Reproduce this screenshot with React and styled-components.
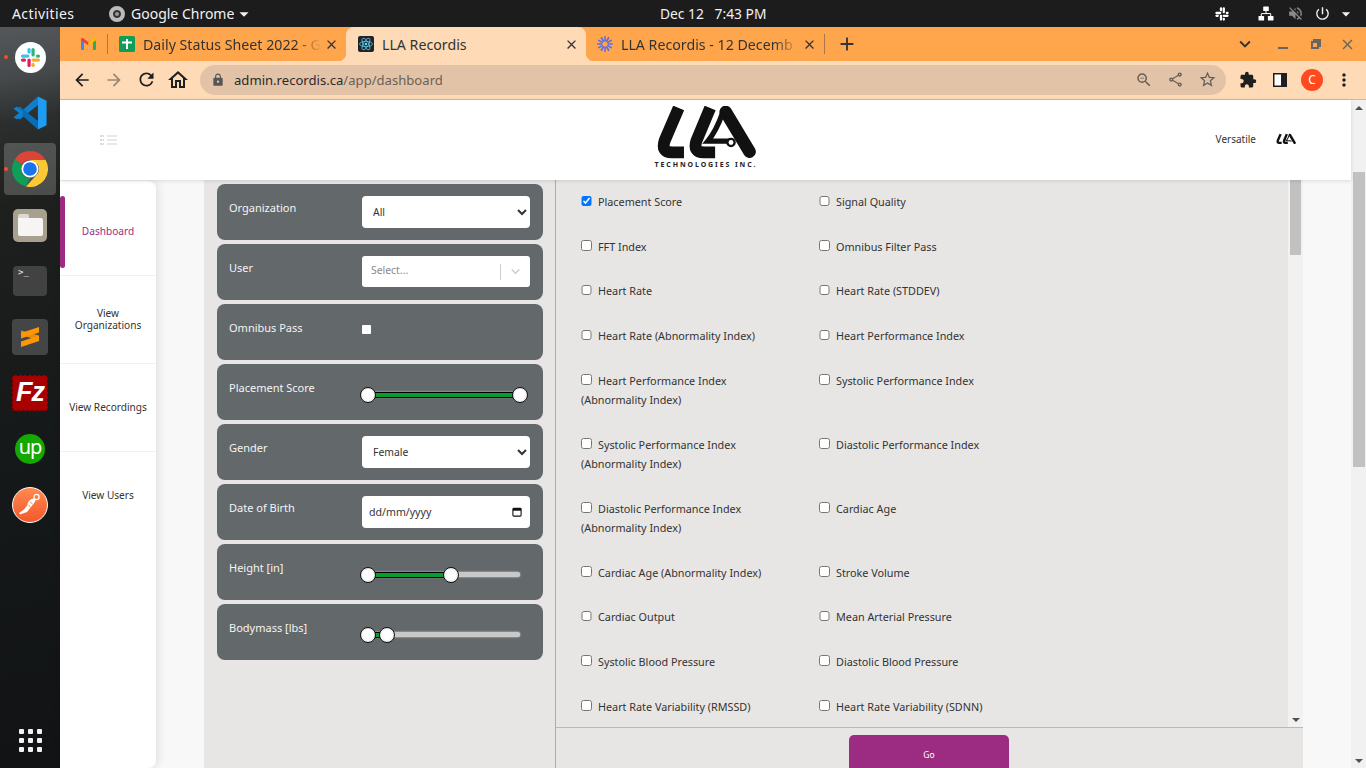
import React from 'react'
import styled, { createGlobalStyle } from 'styled-components'
import {
    MdArrowBack, MdArrowForward, MdRefresh, MdOutlineHome, MdLock, MdZoomOut,
    MdOutlineShare, MdStarBorder, MdExtension, MdMoreVert, MdClose, MdAdd,
    MdExpandMore, MdVolumeOff, MdPowerSettingsNew, MdArrowDropDown,
} from 'react-icons/md'

const FONT = '"Noto Sans", "Open Sans", sans-serif'
const PURPLE = '#9b2c82'

const GlobalStyle = createGlobalStyle`
    html, body { margin: 0; padding: 0; height: 100%; overflow: hidden; }
    body { font-family: ${FONT}; color: #333; }
    * { box-sizing: border-box; }
`

const checkRows = [
    ['Placement Score', 'Signal Quality'],
    ['FFT Index', 'Omnibus Filter Pass'],
    ['Heart Rate', 'Heart Rate (STDDEV)'],
    ['Heart Rate (Abnormality Index)', 'Heart Performance Index'],
    ['Heart Performance Index (Abnormality Index)', 'Systolic Performance Index'],
    ['Systolic Performance Index (Abnormality Index)', 'Diastolic Performance Index'],
    ['Diastolic Performance Index (Abnormality Index)', 'Cardiac Age'],
    ['Cardiac Age (Abnormality Index)', 'Stroke Volume'],
    ['Cardiac Output', 'Mean Arterial Pressure'],
    ['Systolic Blood Pressure', 'Diastolic Blood Pressure'],
    ['Heart Rate Variability (RMSSD)', 'Heart Rate Variability (SDNN)'],
]

const navItems = [
    { label: 'Dashboard', active: true, height: 95 },
    { label: 'View Organizations', height: 88 },
    { label: 'View Recordings', height: 88 },
    { label: 'View Users', height: 88 },
]

function SlackIcon({ size, mono }) {
    const c = mono ? ['#fff', '#fff', '#fff', '#fff'] : ['#36c5f0', '#2eb67d', '#ecb22e', '#e01e5a']
    return (
        <svg width={size} height={size} viewBox="0 0 24 24">
            <rect x="2" y="8.8" width="9" height="3.4" rx="1.7" fill={c[0]} />
            <rect x="8.8" y="2" width="3.4" height="6" rx="1.7" fill={c[0]} />
            <rect x="13" y="2" width="3.4" height="9" rx="1.7" fill={c[1]} />
            <rect x="17.6" y="8.8" width="4.4" height="3.4" rx="1.7" fill={c[1]} />
            <rect x="13" y="13" width="9" height="3.4" rx="1.7" fill={c[2]} />
            <rect x="13" y="17.6" width="3.4" height="4.4" rx="1.7" fill={c[2]} />
            <rect x="8.8" y="13" width="3.4" height="9" rx="1.7" fill={c[3]} />
            <rect x="2" y="13" width="5.4" height="3.4" rx="1.7" fill={c[3]} />
        </svg>
    )
}

function VsCodeIcon() {
    return (
        <svg width="36" height="36" viewBox="0 0 100 100">
            <path d="M72 4 L96 16 V84 L72 96 L72 70 L72 30 Z" fill="#1f9cf0" />
            <path d="M72 4 L72 28 L22 68 L10 60 Z" fill="#0f7fcc" />
            <path d="M72 96 L72 72 L22 32 L10 40 Z" fill="#0a6cb4" />
            <path d="M4 38 L14 32 L30 46 V54 L14 68 L4 62 L20 50 Z" fill="#0f7fcc" />
        </svg>
    )
}

function ChromeIcon({ size }) {
    return (
        <svg width={size} height={size} viewBox="0 0 36 36">
            <path d="M18 0 A18 18 0 0 1 33.6 9 L18 9 A9 9 0 0 0 10.2 13.5 L2.8 8.4 A18 18 0 0 1 18 0 Z" fill="#db4437" />
            <path d="M2.8 8.4 L10.2 13.5 A9 9 0 0 0 18 27 L14 35.6 A18 18 0 0 1 2.8 8.4 Z" fill="#0f9d58" />
            <path d="M33.6 9 A18 18 0 0 1 14 35.6 L25.8 22.5 A9 9 0 0 0 25.8 13.5 L18 9 Z" fill="#fcc934" />
            <circle cx="18" cy="18" r="8.6" fill="#fff" />
            <circle cx="18" cy="18" r="6.8" fill="#1a73e8" />
        </svg>
    )
}

function SublimeIcon() {
    return (
        <svg width="20" height="24" viewBox="0 0 20 24">
            <path d="M1 10 L19 15.5 V10.5 L1 5.5 Z" fill="#e88a10" />
            <path d="M1 8 L19 2 V7.5 L1 13.5 Z" fill="#ff9800" />
            <path d="M1 16.5 L19 10.5 V16 L1 22 Z" fill="#ff9800" />
        </svg>
    )
}

function PostmanIcon() {
    return (
        <svg width="26" height="26" viewBox="0 0 26 26">
            <circle cx="19.5" cy="5" r="2.6" fill="none" stroke="#fff" strokeWidth="1.2" />
            <path d="M17 6.5 C13 7 10.5 10 10.5 13 L7 17.5 L2 21 L3 22.5 L10 20 L14 15 C16.5 12 18 10 18.5 8.5 Z" fill="#fff" />
            <path d="M13 10 L15.5 12 M11.5 13 L13.5 14.6" stroke="#f4682f" strokeWidth="0.8" />
        </svg>
    )
}

function ReactFavicon() {
    return (
        <svg width="16" height="16" viewBox="0 0 16 16">
            <rect width="16" height="16" rx="2" fill="#20232a" />
            <g fill="none" stroke="#61dafb" strokeWidth="0.7">
                <ellipse cx="8" cy="8" rx="6.5" ry="2.6" />
                <ellipse cx="8" cy="8" rx="6.5" ry="2.6" transform="rotate(60 8 8)" />
                <ellipse cx="8" cy="8" rx="6.5" ry="2.6" transform="rotate(120 8 8)" />
            </g>
            <circle cx="8" cy="8" r="1.3" fill="#61dafb" />
        </svg>
    )
}

function BurstFavicon() {
    const spokes = [0, 30, 60, 90, 120, 150]
    return (
        <svg width="16" height="16" viewBox="0 0 16 16">
            <g stroke="#5a6be8" strokeWidth="1.6" strokeLinecap="round">
                {spokes.map((deg) => (
                    <line key={deg} x1="8" y1="0.8" x2="8" y2="15.2" transform={`rotate(${deg} 8 8)`} />
                ))}
            </g>
            <circle cx="8" cy="8" r="2.6" fill="#ffa64d" />
        </svg>
    )
}

function GmailFavicon() {
    return (
        <svg width="15" height="12" viewBox="0 0 15 12">
            <path d="M0 2 L3 3.6 V12 H1 A1 1 0 0 1 0 11 Z" fill="#4285f4" />
            <path d="M15 2 L12 3.6 V12 H14 A1 1 0 0 0 15 11 Z" fill="#34a853" />
            <path d="M0 1.5 C0 0 1.6 -0.3 2.6 0.5 L7.5 4.2 V7.4 L0 2.2 Z" fill="#ea4335" />
            <path d="M15 1.5 C15 0 13.4 -0.3 12.4 0.5 L7.5 4.2 V7.4 L15 2.2 Z" fill="#fbbc04" />
        </svg>
    )
}

function SheetsFavicon() {
    return (
        <svg width="16" height="16" viewBox="0 0 16 16">
            <rect width="16" height="16" rx="1.5" fill="#0f9d58" />
            <path d="M3 5.6 H7 V3 H9 V5.6 H13 V7.4 H9 V13 H7 V7.4 H3 Z" fill="#fff" />
        </svg>
    )
}

function NetworkIcon() {
    return (
        <svg width="16" height="15" viewBox="0 0 16 15">
            <rect x="5.2" y="0.5" width="5.6" height="4.5" rx="0.6" fill="#fff" />
            <rect x="0.5" y="10" width="5.6" height="4.5" rx="0.6" fill="#fff" />
            <rect x="9.9" y="10" width="5.6" height="4.5" rx="0.6" fill="#fff" />
            <path d="M8 5 V7.6 M3.3 10 V7.6 H12.7 V10" stroke="#fff" strokeWidth="1" fill="none" />
        </svg>
    )
}

function MenuLinesIcon() {
    return (
        <svg width="17" height="10" viewBox="0 0 17 10">
            <g stroke="#aaa" strokeWidth="0.9">
                <path d="M0 1 H4 M0 5 H4 M0 9 H4" strokeDasharray="2.4 0.6" />
                <path d="M7 1 H17 M7 5 H17 M7 9 H17" stroke="#ccc" />
            </g>
        </svg>
    )
}

function SidePanelIcon() {
    return (
        <svg width="14" height="14" viewBox="0 0 14 14">
            <rect width="14" height="14" fill="#1f1f1f" />
            <rect x="1.5" y="1.5" width="6.5" height="11" fill="#fff" />
        </svg>
    )
}

function CalendarIcon() {
    return (
        <svg width="10" height="10" viewBox="0 0 11 11">
            <rect x="1" y="1.5" width="9" height="8.5" rx="1" fill="none" stroke="#111" strokeWidth="1.2" />
            <rect x="1" y="1.5" width="9" height="2.6" fill="#111" />
        </svg>
    )
}

function LlaMark({ width, height }) {
    return (
        <svg width={width} height={height} viewBox="100 18 305 160">
            <path d="M170 24 L128 122 Q116 158 150 158 L186 158" fill="none" stroke="#111" strokeWidth="36" strokeLinejoin="round" />
            <path d="M265 24 L224 122 Q212 158 246 158 L280 158" fill="none" stroke="#111" strokeWidth="36" strokeLinejoin="round" />
            <path d="M312 36 L384 156" fill="none" stroke="#111" strokeWidth="38" strokeLinecap="round" />
            <path d="M302 40 Q284 92 258 124 L322 124" fill="none" stroke="#111" strokeWidth="16" />
            <circle cx="328" cy="128" r="11" fill="#fff" stroke="#111" strokeWidth="7" />
        </svg>
    )
}

function Slider({ from, to, max = 100 }) {
    const fromPct = (from / max) * 100
    const toPct = (to / max) * 100
    return (
        <Track>
            <TrackFill $from={fromPct} $to={toPct} />
            <Thumb $at={fromPct} />
            <Thumb $at={toPct} />
        </Track>
    )
}

function TabItem({ favicon, title, active }) {
    const Wrap = active ? ActiveTab : Tab
    return (
        <Wrap>
            <TabIcon>{favicon}</TabIcon>
            <TabTitle $fade={!active}>{title}</TabTitle>
            <TabClose><MdClose size={15} /></TabClose>
        </Wrap>
    )
}

function App() {
    return (
        <Screen>
            <GlobalStyle />
            <TopBar>
                <Activities>Activities</Activities>
                <AppMenu>
                    <AppMenuBadge />
                    Google Chrome
                    <AppMenuCaret><MdArrowDropDown size={22} /></AppMenuCaret>
                </AppMenu>
                <Clock>Dec 12&nbsp;&nbsp; 7:43 PM</Clock>
                <Tray>
                    <TrayItem $width={56}><SlackIcon size={16} mono /></TrayItem>
                    <TrayItem $width={32}><NetworkIcon /></TrayItem>
                    <TrayItem $width={26}><MdVolumeOff size={17} color="#8a8a8a" /></TrayItem>
                    <TrayItem $width={28}><MdPowerSettingsNew size={17} /></TrayItem>
                    <TrayItem $width={20}><MdArrowDropDown size={22} /></TrayItem>
                </Tray>
            </TopBar>

            <Desktop>
                <Dock>
                    <DockSlot>
                        <RunningDot />
                        <SlackCircle><SlackIcon size={23} /></SlackCircle>
                    </DockSlot>
                    <DockSlot><VsCodeIcon /></DockSlot>
                    <DockSlot $highlight>
                        <RunningDot />
                        <ChromeIcon size={36} />
                    </DockSlot>
                    <DockSlot>
                        <FilesTile><FolderShape /></FilesTile>
                    </DockSlot>
                    <DockSlot>
                        <TerminalTile>&gt;_</TerminalTile>
                    </DockSlot>
                    <DockSlot>
                        <SublimeTile><SublimeIcon /></SublimeTile>
                    </DockSlot>
                    <DockSlot>
                        <ZillaTile>Fz</ZillaTile>
                    </DockSlot>
                    <DockSlot>
                        <UpworkBadge>up</UpworkBadge>
                    </DockSlot>
                    <DockSlot>
                        <PostmanBadge><PostmanIcon /></PostmanBadge>
                    </DockSlot>
                    <AppGrid>
                        {Array.from({ length: 9 }).map((_, i) => <AppGridDot key={i} />)}
                    </AppGrid>
                </Dock>

                <Browser>
                    <TabStrip>
                        <PinnedTab><GmailFavicon /></PinnedTab>
                        <TabSeparator />
                        <TabItem favicon={<SheetsFavicon />} title="Daily Status Sheet 2022 - G" />
                        <TabItem active favicon={<ReactFavicon />} title="LLA Recordis" />
                        <TabItem favicon={<BurstFavicon />} title="LLA Recordis - 12 Decemb" />
                        <TabSeparator />
                        <NewTab><MdAdd size={22} /></NewTab>
                        <WindowButtons>
                            <StripIcon $width={38}><MdExpandMore size={22} color="#333" /></StripIcon>
                            <StripIcon $width={38}><MinimizeBar /></StripIcon>
                            <StripIcon $width={26}><RestoreGlyph /></StripIcon>
                            <StripIcon $width={38}><MdClose size={17} color="#666" /></StripIcon>
                        </WindowButtons>
                    </TabStrip>

                    <Toolbar>
                        <ToolButton><MdArrowBack size={20} /></ToolButton>
                        <ToolButton $muted><MdArrowForward size={20} /></ToolButton>
                        <ToolButton><MdRefresh size={21} /></ToolButton>
                        <ToolButton><MdOutlineHome size={24} /></ToolButton>
                        <UrlPill>
                            <MdLock size={14} color="#555" />
                            <UrlText>admin.recordis.ca<UrlPath>/app/dashboard</UrlPath></UrlText>
                            <UrlActions>
                                <MdZoomOut size={18} />
                                <MdOutlineShare size={17} />
                                <MdStarBorder size={19} />
                            </UrlActions>
                        </UrlPill>
                        <ToolIcons>
                            <ToolButton><MdExtension size={18} /></ToolButton>
                            <ToolButton><SidePanelIcon /></ToolButton>
                            <ToolButton><Avatar>C</Avatar></ToolButton>
                            <ToolButton><MdMoreVert size={20} /></ToolButton>
                        </ToolIcons>
                    </Toolbar>

                    <Viewport>
                        <Page>
                            <Header>
                                <MenuButton><MenuLinesIcon /></MenuButton>
                                <Brand>
                                    <LlaMark width={102} height={53} />
                                    <BrandText>TECHNOLOGIES INC.</BrandText>
                                </Brand>
                                <HeaderUser>
                                    Versatile
                                    <SmallMark><LlaMark width={20} height={12} /></SmallMark>
                                </HeaderUser>
                            </Header>

                            <Content>
                                <Sidebar>
                                    {navItems.map((item) => (
                                        <NavItem key={item.label} $active={item.active} $height={item.height}>
                                            {item.active && <ActiveBar />}
                                            <NavLabel>{item.label}</NavLabel>
                                        </NavItem>
                                    ))}
                                </Sidebar>

                                <Main>
                                    <FilterPanel>
                                        <FilterCard>
                                            <FilterLabel>Organization</FilterLabel>
                                            <NativeSelect defaultValue="All">
                                                <option>All</option>
                                            </NativeSelect>
                                        </FilterCard>
                                        <FilterCard>
                                            <FilterLabel>User</FilterLabel>
                                            <ComboBox>
                                                <ComboText>Select...</ComboText>
                                                <ComboDivider />
                                                <ComboArrow><MdExpandMore size={17} /></ComboArrow>
                                            </ComboBox>
                                        </FilterCard>
                                        <FilterCard>
                                            <FilterLabel>Omnibus Pass</FilterLabel>
                                            <PassBox />
                                        </FilterCard>
                                        <FilterCard>
                                            <FilterLabel>Placement Score</FilterLabel>
                                            <Slider from={0} to={100} />
                                        </FilterCard>
                                        <FilterCard>
                                            <FilterLabel>Gender</FilterLabel>
                                            <NativeSelect defaultValue="Female">
                                                <option>Female</option>
                                            </NativeSelect>
                                        </FilterCard>
                                        <FilterCard>
                                            <FilterLabel>Date of Birth</FilterLabel>
                                            <DateField>
                                                dd/mm/yyyy
                                                <CalendarIcon />
                                            </DateField>
                                        </FilterCard>
                                        <FilterCard>
                                            <FilterLabel>Height [in]</FilterLabel>
                                            <Slider from={0} to={54.6} />
                                        </FilterCard>
                                        <FilterCard>
                                            <FilterLabel>Bodymass [lbs]</FilterLabel>
                                            <Slider from={0} to={12.5} />
                                        </FilterCard>
                                    </FilterPanel>

                                    <ResultPanel>
                                        <ListArea>
                                            <CheckList>
                                                {checkRows.flat().map((label) => (
                                                    <CheckItem key={label}>
                                                        <CheckBox type="checkbox" defaultChecked={label === 'Placement Score'} />
                                                        {label}
                                                    </CheckItem>
                                                ))}
                                            </CheckList>
                                            <ScrollBar>
                                                <ScrollUp />
                                                <InnerThumb />
                                                <ScrollFill />
                                                <ScrollDown />
                                            </ScrollBar>
                                        </ListArea>
                                        <Footer>
                                            <GoButton>Go</GoButton>
                                        </Footer>
                                    </ResultPanel>
                                </Main>
                            </Content>
                        </Page>

                        <ScrollBar>
                            <ScrollUp />
                            <OuterThumb />
                            <ScrollFill />
                            <ScrollDown />
                        </ScrollBar>
                    </Viewport>
                </Browser>
            </Desktop>
        </Screen>
    )
}

export default App


const Screen = styled.div`
    width: 1366px;
    height: 768px;
    display: flex;
    flex-direction: column;
    overflow: hidden;
`

const TopBar = styled.div`
    height: 27px;
    flex: none;
    background: #1c1c1c;
    color: #f2f2f2;
    display: flex;
    align-items: center;
    padding-left: 12px;
    font-size: 14px;
    position: relative;
`
const Activities = styled.div`
    width: 97px;
    letter-spacing: 0.4px;
`
const AppMenu = styled.div`
    display: flex;
    align-items: center;
    gap: 6px;
`
const AppMenuCaret = styled.div`
    display: flex;
    margin-left: -7px;
`
const AppMenuBadge = styled.div`
    width: 16px;
    height: 16px;
    border-radius: 50%;
    background: #999;
    border: 4px solid #bbb;
    box-shadow: inset 0 0 0 2px #333;
`
const Clock = styled.div`
    position: absolute;
    left: 660px;
    top: 4px;
    font-size: 13.8px;
`
const Tray = styled.div`
    margin-left: auto;
    display: flex;
    align-items: center;
    padding-right: 10px;
`
const TrayItem = styled.div`
    width: ${(props) => props.$width}px;
    display: flex;
    justify-content: center;
    align-items: center;
`

const Desktop = styled.div`
    flex: 1;
    display: flex;
    min-height: 0;
`

const Dock = styled.div`
    width: 60px;
    flex: none;
    display: flex;
    flex-direction: column;
    align-items: center;
    padding: 4px 0 16px;
    background: linear-gradient(170deg, #55585a 0%, #46494b 7%, #2b2e2c 13%, #1d201d 24%, #161919 55%, #111315 100%);
`
const DockSlot = styled.div`
    width: 52px;
    height: 52px;
    margin-bottom: 4px;
    flex: none;
    display: flex;
    align-items: center;
    justify-content: center;
    position: relative;
    border-radius: 4px;
    background: ${(props) => (props.$highlight ? 'rgba(255,255,255,0.2)' : 'transparent')};
`
const RunningDot = styled.div`
    position: absolute;
    left: 0;
    top: 24px;
    width: 4px;
    height: 4px;
    border-radius: 50%;
    background: #e95420;
`
const SlackCircle = styled.div`
    width: 31px;
    height: 31px;
    border-radius: 50%;
    background: #fff;
    display: flex;
    align-items: center;
    justify-content: center;
`
const FilesTile = styled.div`
    width: 34px;
    height: 33px;
    border-radius: 5px;
    background: #a8a08f;
    display: flex;
    align-items: center;
    justify-content: center;
`
const FolderShape = styled.div`
    width: 25px;
    height: 18px;
    margin-top: 4px;
    background: #f6f5f3;
    border-radius: 0 2px 2px 2px;
    position: relative;
    &::before {
        content: '';
        position: absolute;
        left: 0;
        top: -4px;
        width: 11px;
        height: 4px;
        background: #dcd9d2;
        border-radius: 2px 2px 0 0;
    }
`
const TerminalTile = styled.div`
    width: 34px;
    height: 30px;
    border-radius: 4px;
    background: #424242;
    color: #eee;
    font-family: "DejaVu Sans Mono", monospace;
    font-size: 9px;
    padding: 1px 0 0 5px;
`
const SublimeTile = styled.div`
    width: 36px;
    height: 36px;
    border-radius: 4px;
    background: #444546;
    display: flex;
    align-items: center;
    justify-content: center;
`
const ZillaTile = styled.div`
    width: 36px;
    height: 36px;
    background: #a80000;
    border: 1px dashed #5f0000;
    color: #fff;
    font-family: "Liberation Sans", sans-serif;
    font-weight: 700;
    font-style: italic;
    font-size: 27px;
    line-height: 33px;
    text-align: center;
    letter-spacing: -1px;
`
const UpworkBadge = styled.div`
    width: 30px;
    height: 30px;
    border-radius: 50%;
    background: #14a800;
    color: #fff;
    font-size: 20px;
    font-weight: 400;
    line-height: 25px;
    letter-spacing: -1px;
    text-align: center;
`
const PostmanBadge = styled.div`
    width: 36px;
    height: 36px;
    border-radius: 50%;
    background: linear-gradient(180deg, #ff8a50, #f4582a);
    border: 1.5px solid #fff;
    display: flex;
    align-items: center;
    justify-content: center;
`
const AppGrid = styled.div`
    margin-top: auto;
    width: 23px;
    display: grid;
    grid-template-columns: repeat(3, 5px);
    justify-content: space-between;
    row-gap: 4px;
`
const AppGridDot = styled.div`
    width: 5px;
    height: 5px;
    border-radius: 1px;
    background: #f2f2f2;
`

const Browser = styled.div`
    flex: 1;
    min-width: 0;
    display: flex;
    flex-direction: column;
`

const TabStrip = styled.div`
    height: 34px;
    flex: none;
    background: #ffa64d;
    display: flex;
    align-items: stretch;
    color: #333;
`
const PinnedTab = styled.div`
    width: 47px;
    padding-left: 21px;
    display: flex;
    align-items: center;
`
const TabSeparator = styled.div`
    width: 1px;
    height: 20px;
    margin-top: 7px;
    background: #a9774a;
`
const Tab = styled.div`
    width: 238px;
    padding: 0 5px 0 11px;
    display: flex;
    align-items: center;
    font-size: 14.2px;
`
const ActiveTab = styled(Tab)`
    width: 240px;
    padding-left: 12px;
    background: #fedab6;
    border-radius: 8px 8px 0 0;
    position: relative;
    &::before,
    &::after {
        content: '';
        position: absolute;
        bottom: 0;
        width: 8px;
        height: 8px;
    }
    &::before {
        left: -8px;
        background: radial-gradient(circle at 0 0, transparent 8px, #fedab6 8.5px);
    }
    &::after {
        right: -8px;
        background: radial-gradient(circle at 100% 0, transparent 8px, #fedab6 8.5px);
    }
`
const TabIcon = styled.div`
    width: 16px;
    height: 16px;
    flex: none;
    margin-right: 8px;
`
const TabTitle = styled.div`
    flex: 1;
    min-width: 0;
    white-space: nowrap;
    overflow: hidden;
    ${(props) => props.$fade && `
        -webkit-mask-image: linear-gradient(90deg, #000 86%, transparent 100%);
        mask-image: linear-gradient(90deg, #000 86%, transparent 100%);
    `}
`
const TabClose = styled.div`
    width: 20px;
    flex: none;
    display: flex;
    justify-content: center;
    color: #333;
`
const NewTab = styled.div`
    width: 44px;
    display: flex;
    align-items: center;
    justify-content: center;
`
const WindowButtons = styled.div`
    margin-left: auto;
    display: flex;
    align-items: center;
`
const StripIcon = styled.div`
    width: ${(props) => props.$width}px;
    display: flex;
    justify-content: center;
`
const MinimizeBar = styled.div`
    width: 10px;
    height: 2px;
    margin-top: 8px;
    background: #666;
`
const RestoreGlyph = styled.div`
    width: 8px;
    height: 8px;
    margin-top: 2px;
    border: 2px solid #666;
    box-shadow: 2px -2px 0 0 #666;
`

const Toolbar = styled.div`
    height: 39px;
    flex: none;
    background: #fedab6;
    border-bottom: 1px solid #d5b697;
    display: flex;
    align-items: center;
    padding: 0 6px 1px 6px;
`
const ToolButton = styled.div`
    width: 32px;
    height: 32px;
    flex: none;
    display: flex;
    align-items: center;
    justify-content: center;
    color: ${(props) => (props.$muted ? '#9a8674' : '#1f1f1f')};
`
const UrlPill = styled.div`
    width: 1026px;
    height: 30px;
    margin-left: 6px;
    border-radius: 15px;
    background: #e3c3a8;
    display: flex;
    align-items: center;
    padding: 0 9px 0 11px;
`
const UrlText = styled.div`
    margin-left: 9px;
    font-size: 13.1px;
    color: #2b2b2b;
`
const UrlPath = styled.span`
    color: #6b5f55;
`
const UrlActions = styled.div`
    margin-left: auto;
    width: 82px;
    display: flex;
    align-items: center;
    justify-content: space-between;
    color: #66605a;
`
const ToolIcons = styled.div`
    margin-left: 6px;
    display: flex;
`
const Avatar = styled.div`
    width: 22px;
    height: 22px;
    border-radius: 50%;
    background: #ff4a20;
    color: #fff;
    font-size: 12px;
    line-height: 22px;
    text-align: center;
`

const Viewport = styled.div`
    flex: 1;
    min-height: 0;
    display: flex;
`
const Page = styled.div`
    flex: 1;
    min-width: 0;
    display: flex;
    flex-direction: column;
    background: #f8f8f8;
`
const Header = styled.div`
    height: 80px;
    flex: none;
    background: #fff;
    display: flex;
    align-items: center;
    padding: 0 55px 0 40px;
    position: relative;
    z-index: 3;
    box-shadow: 0 1px 4px rgba(0, 0, 0, 0.12);
`
const MenuButton = styled.div`
    width: 555px;
    display: flex;
    align-items: center;
`
const Brand = styled.div`
    width: 102px;
    display: flex;
    flex-direction: column;
    align-items: center;
    padding-bottom: 6px;
`
const BrandText = styled.div`
    font-size: 7px;
    font-weight: 700;
    letter-spacing: 1.9px;
    color: #222;
    white-space: nowrap;
    line-height: 8px;
    margin-top: 2px;
`
const HeaderUser = styled.div`
    margin-left: auto;
    display: flex;
    align-items: center;
    font-size: 10px;
    color: #333;
    padding-bottom: 2px;
`
const SmallMark = styled.div`
    margin-left: 20px;
    display: flex;
`

const Content = styled.div`
    flex: 1;
    min-height: 0;
    display: flex;
`
const Sidebar = styled.div`
    width: 96px;
    flex: none;
    margin: 1px 48px 0 0;
    background: #fff;
    border-radius: 0 8px 8px 0;
    box-shadow: 2px 0 10px rgba(0, 0, 0, 0.1);
`
const NavItem = styled.div`
    height: ${(props) => props.$height}px;
    border-bottom: 1px solid #f1f1f1;
    display: flex;
    align-items: center;
    justify-content: center;
    position: relative;
    padding: ${(props) => (props.$active ? '5px 0 0' : '0 0 2px')};
    color: ${(props) => (props.$active ? PURPLE : '#333')};
    &:last-child {
        border-bottom: none;
    }
`
const NavLabel = styled.div`
    width: 82px;
    font-size: 10.1px;
    line-height: 12px;
    text-align: center;
`
const ActiveBar = styled.div`
    position: absolute;
    left: 0;
    top: 15px;
    width: 5px;
    height: 72px;
    border-radius: 3px;
    background: ${PURPLE};
`

const Main = styled.div`
    width: 1099px;
    flex: none;
    background: #e8e6e4;
    display: flex;
`
const FilterPanel = styled.div`
    width: 352px;
    flex: none;
    border-right: 1px solid #aeaeae;
    padding: 4px 12px 0 13px;
    display: flex;
    flex-direction: column;
    gap: 4px;
`
const FilterCard = styled.div`
    height: 56px;
    flex: none;
    border-radius: 8px;
    background: #63686b;
    padding: 12px 13px 0 12px;
    display: grid;
    grid-template-columns: 133px 168px;
    align-items: start;
`
const FilterLabel = styled.div`
    color: #f4f4f4;
    font-size: 11px;
    line-height: 24px;
`
const NativeSelect = styled.select`
    width: 168px;
    height: 32px;
    border: none;
    border-radius: 4px;
    background-color: #fff;
    padding: 0 3px 0 7px;
    font-family: ${FONT};
    font-size: 10.4px;
    color: #333;
`
const ComboBox = styled.div`
    width: 168px;
    height: 31px;
    background: #fff;
    border-radius: 3px;
    display: flex;
    align-items: center;
    font-size: 10.4px;
    padding-left: 9px;
`
const ComboText = styled.div`
    flex: 1;
    color: #888;
    margin-bottom: 3px;
`
const ComboDivider = styled.div`
    width: 1px;
    height: 16px;
    background: #ccc;
`
const ComboArrow = styled.div`
    width: 29px;
    display: flex;
    justify-content: center;
    color: #ccc;
`
const PassBox = styled.div`
    width: 9px;
    height: 9px;
    margin-top: 9px;
    background: #fff;
    border-radius: 1px;
`
const DateField = styled.div`
    width: 168px;
    height: 32px;
    border-radius: 4px;
    background: #fff;
    display: flex;
    align-items: center;
    justify-content: space-between;
    padding: 0 8px 1px 7px;
    font-size: 10.6px;
    color: #333;
`
const Track = styled.div`
    width: 152px;
    height: 5px;
    margin: 16px 0 0 6px;
    border-radius: 3px;
    background: #c9c9c9;
    box-shadow: 0 0 2px #e6e6e6;
    position: relative;
`
const TrackFill = styled.div`
    position: absolute;
    left: ${(props) => props.$from}%;
    width: ${(props) => props.$to - props.$from}%;
    top: -0.5px;
    height: 6px;
    background: #0a9b2e;
    border: 1px solid #000;
`
const Thumb = styled.div`
    position: absolute;
    left: ${(props) => props.$at}%;
    top: 50%;
    width: 16px;
    height: 16px;
    margin: -8px 0 0 -8px;
    border-radius: 50%;
    background: radial-gradient(circle at 50% 50%, #fff 45%, #d4d4d4 100%);
    border: 1px solid #111;
`

const ResultPanel = styled.div`
    flex: 1;
    min-width: 0;
    display: flex;
    flex-direction: column;
`
const ListArea = styled.div`
    flex: 1;
    min-height: 0;
    display: flex;
    overflow: hidden;
    border-bottom: 1px solid #ccadc5;
`
const CheckList = styled.div`
    flex: 1;
    min-width: 0;
    padding: 12px 0 0 25px;
    display: grid;
    grid-template-columns: 238px 238px;
    align-content: start;
`
const CheckItem = styled.label`
    font-size: 10.8px;
    line-height: 19.2px;
    padding: 0 48px 25.5px 0;
    color: #333;
`
const CheckBox = styled.input`
    width: 10.5px;
    height: 10.5px;
    margin: 0 6.5px 0 0;
    vertical-align: 0;
`
const ScrollBar = styled.div`
    width: 15px;
    flex: none;
    background: #f1f1f1;
    display: flex;
    flex-direction: column;
    align-items: center;
`
const ScrollUp = styled.div`
    width: 0;
    height: 0;
    margin: 6px 0 4px;
    border-left: 4px solid transparent;
    border-right: 4px solid transparent;
    border-bottom: 4px solid #505050;
`
const ScrollDown = styled.div`
    width: 0;
    height: 0;
    margin: 4px 0 5px;
    border-left: 4px solid transparent;
    border-right: 4px solid transparent;
    border-top: 4px solid #505050;
`
const ScrollFill = styled.div`
    flex: 1;
`
const InnerThumb = styled.div`
    width: 11px;
    height: 75px;
    margin-top: -14px;
    background: #c1c1c1;
    z-index: 1;
`
const OuterThumb = styled.div`
    width: 12px;
    height: 295px;
    margin-top: 58px;
    background: #c1c1c1;
`
const Footer = styled.div`
    height: 40px;
    flex: none;
    padding: 7px 1px 0 0;
    display: flex;
    justify-content: center;
    overflow: hidden;
`
const GoButton = styled.div`
    width: 160px;
    height: 40px;
    flex: none;
    border-radius: 5px;
    background: ${PURPLE};
    color: #fff;
    font-size: 8.5px;
    line-height: 40px;
    text-align: center;
`
